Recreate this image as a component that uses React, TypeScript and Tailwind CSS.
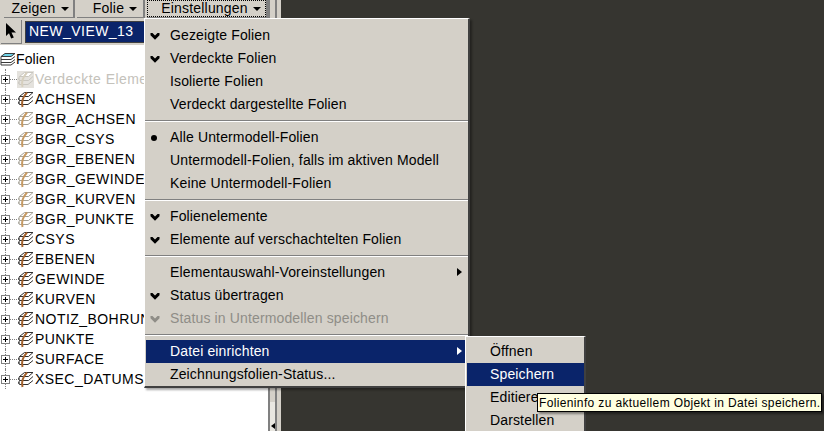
const font = 'font-["Liberation_Sans",Arial,sans-serif]';

const layers = [
  { name: 'Verdeckte Elemente', faded: true },
  { name: 'ACHSEN' },
  { name: 'BGR_ACHSEN', pale: true },
  { name: 'BGR_CSYS', pale: true },
  { name: 'BGR_EBENEN', pale: true },
  { name: 'BGR_GEWINDE', pale: true },
  { name: 'BGR_KURVEN', pale: true },
  { name: 'BGR_PUNKTE', pale: true },
  { name: 'CSYS' },
  { name: 'EBENEN' },
  { name: 'GEWINDE' },
  { name: 'KURVEN' },
  { name: 'NOTIZ_BOHRUNG' },
  { name: 'PUNKTE' },
  { name: 'SURFACE' },
  { name: 'XSEC_DATUMS' },
];

type MenuItem = {
  label?: string;
  mark?: 'check' | 'dot';
  disabled?: boolean;
  active?: boolean;
  arrow?: boolean;
  separator?: boolean;
};

const mainMenu: MenuItem[] = [
  { label: 'Gezeigte Folien', mark: 'check' },
  { label: 'Verdeckte Folien', mark: 'check' },
  { label: 'Isolierte Folien' },
  { label: 'Verdeckt dargestellte Folien' },
  { separator: true },
  { label: 'Alle Untermodell-Folien', mark: 'dot' },
  { label: 'Untermodell-Folien, falls im aktiven Modell' },
  { label: 'Keine Untermodell-Folien' },
  { separator: true },
  { label: 'Folienelemente', mark: 'check' },
  { label: 'Elemente auf verschachtelten Folien', mark: 'check' },
  { separator: true },
  { label: 'Elementauswahl-Voreinstellungen', arrow: true },
  { label: 'Status übertragen', mark: 'check' },
  { label: 'Status in Untermodellen speichern', mark: 'check', disabled: true },
  { separator: true },
  { label: 'Datei einrichten', active: true, arrow: true },
  { label: 'Zeichnungsfolien-Status...' },
];

const Check = ({ color }: { color: string }) => (
  <svg width="10" height="8" viewBox="0 0 10 8">
    <path d="M0.5 1 H2.5 L5 3.5 L7.5 1 H9.5 V3.2 L5 7.7 L0.5 3.2 Z" fill={color} />
  </svg>
);

const LayerIcon = ({ faded, pale }: { faded?: boolean; pale?: boolean }) => {
  const line = faded ? '#c9c7c0' : pale ? '#a3a095' : '#2f2f2f';
  const pole = faded ? '#d6cfbd' : pale ? '#c79a62' : '#a5622c';
  return (
    <svg width="17" height="17" viewBox="0 0 17 17" className={faded ? 'bg-[#e4e2dd]' : ''}>
      <path d="M2.5 5.5 L7.5 1.5 H16 L11.5 5.5 Z" fill="#ffffff" stroke={line} />
      <path d="M2.5 5.5 L1.5 8 L2.5 9.5 L1.5 12 L2.5 13.5 H11 L16 9.5 M2.5 9.5 H11.5 L16 5.5 M1.5 8 H3 M1.5 12 H3" fill="none" stroke={line} />
      <path d="M5.5 16 Q3.5 8.5 10 1.5" fill="none" stroke={pole} strokeWidth="2" />
    </svg>
  );
};

const Expander = () => (
  <div className="flex items-center w-[16px] h-full shrink-0 relative">
    <div className="absolute left-[4px] top-0 h-full border-l border-dotted border-[#808080]" />
    <div className="w-[9px] h-[9px] border border-[#808080] bg-white flex items-center justify-center relative shrink-0">
      <div className="w-[5px] h-px bg-black" />
      <div className="absolute w-px h-[5px] bg-black" />
    </div>
    <div className="w-[7px] border-t border-dotted border-[#808080]" />
  </div>
);

const ToolButton = ({ label, width, focused }: { label: string; width: string; focused?: boolean }) => (
  <div className={`${width} h-[18px] shrink-0 flex items-center bg-[#d4d0c8] border-r-2 border-b border-r-[#808080] border-b-[#808080] text-[14px] tracking-[0.2px] text-black`}>
    <div className={`flex items-center justify-center gap-[5px] w-full h-full ${focused ? 'border border-dotted border-black pl-[9px]' : ''}`}>
      <span>{label}</span>
      <span className="w-0 h-0 border-x-[4px] border-x-transparent border-t-[4px] border-t-black" />
    </div>
  </div>
);

const Row = ({ item }: { item: MenuItem }) => {
  if (item.separator) {
    return (
      <div className="h-[10px] flex flex-col justify-center -mx-px">
        <div className="h-px bg-[#808080]" />
        <div className="h-px bg-white" />
      </div>
    );
  }
  const text = item.active ? 'text-white bg-[#0a246a]' : item.disabled ? 'text-[#8f8d87]' : 'text-black';
  return (
    <div className={`h-[23px] flex items-center text-[14px] tracking-[0.14px] relative ${text}`}>
      <div className="w-[24px] shrink-0 flex pl-[4px]">
        {item.mark === 'check' && <Check color={item.disabled ? '#8f8d87' : '#000000'} />}
        {item.mark === 'dot' && <div className="ml-[1px] w-[6px] h-[6px] rounded-full bg-black" />}
      </div>
      <span className="whitespace-nowrap">{item.label}</span>
      {item.arrow && (
        <span className={`absolute right-[5px] top-[7px] w-0 h-0 border-y-[4.5px] border-y-transparent border-l-[5px] ${item.active ? 'border-l-white' : 'border-l-black'}`} />
      )}
    </div>
  );
};

export default function App() {
  return (
    <div className={`relative w-[824px] h-[431px] overflow-hidden flex bg-[#363530] ${font}`}>
      <div className="w-[268px] h-full bg-white flex flex-col shrink-0">
        <div className="flex gap-[2px] bg-[#d4d0c8] h-[18px]">
          <div className="w-[2px] shrink-0" />
          <ToolButton label="Zeigen" width="w-[71px] pl-[3px]" />
          <ToolButton label="Folie" width="w-[68px] pl-[10px]" />
          <ToolButton label="Einstellungen" width="w-[121px]" focused />
        </div>
        <div className="flex items-center gap-[3px] h-[27px] bg-[#d4d0c8] pl-[1px]">
          <div className="w-[21px] h-[24px] flex items-center justify-center border-r border-b border-[#808080]">
            <svg width="12" height="16" viewBox="0 0 12 16">
              <path d="M1 0 V13 L4 10.2 L6.2 15.5 L8.8 14.4 L6.5 9.5 H11 Z" fill="#000000" />
            </svg>
          </div>
          <div className="w-[125px] h-[22px] border border-[#404040] bg-[#0a246a] text-white text-[14px] tracking-[0.45px] flex items-center pl-[3px]">
            NEW_VIEW_13
          </div>
        </div>
        <div className="flex-1 pt-[4px] overflow-hidden">
          <div className="h-[20px] flex items-center text-[14px] tracking-[0.14px] text-black">
            <svg width="16" height="14" viewBox="0 0 16 14">
              <path d="M1 4.5 L5 1.5 H15 L11 4.5 Z" fill="#6fd3e8" stroke="#3a3a3a" />
              <path d="M1 7.5 H11 L15 4.5 M1 10.5 H11 L15 7.5 M1 13 H11 L15 10 M1 4.5 V13" fill="none" stroke="#3a3a3a" />
            </svg>
            <span>Folien</span>
          </div>
          {layers.map((layer) => (
            <div key={layer.name} className="h-[20px] flex items-center text-[14px] tracking-[0.45px] whitespace-nowrap pl-[1px]">
              <Expander />
              <LayerIcon faded={layer.faded} pale={layer.pale} />
              <span className={`ml-[1px] ${layer.faded ? 'text-[#c4c2bb]' : 'text-black'}`}>{layer.name}</span>
            </div>
          ))}
        </div>
      </div>

      <div className="w-[13px] shrink-0 h-full flex bg-[#d4d0c8] relative">
        <div className="w-[2px] bg-[#808080]" />
        <div className="w-[5px]" />
        <div className="w-[2px] bg-[#808080]" />
        <div className="w-[4px] bg-[#d4d0c8]" />
        <div className="absolute left-[2px] bottom-0 w-[5px] h-[29px] bg-[#e9e7e1] flex items-end justify-center pb-[2px]">
          <span className="w-0 h-0 border-y-[3.5px] border-y-transparent border-r-[4px] border-r-black" />
        </div>
      </div>

      <div className="absolute left-[144px] top-[18px] w-[326px] h-[370px] bg-[#d4d0c8] border-t border-l border-t-white border-l-white border-r-2 border-b-2 border-r-[#404040] border-b-[#404040] px-[1px] pt-[5px] shadow-[2px_2px_2px_rgba(0,0,0,0.35)]">
        {mainMenu.map((item, i) => (
          <Row key={i} item={item} />
        ))}
      </div>

      <div className="absolute left-[465px] top-[336px] w-[121px] h-[110px] bg-[#d4d0c8] border-t border-l border-t-white border-l-white border-r-2 border-r-[#404040] pl-[1px] pt-[3px] text-[14px] tracking-[0.14px] text-black">
        <div className="h-[23px] flex items-center pl-[23px]">Öffnen</div>
        <div className="h-[23px] flex items-center pl-[23px] bg-[#0a246a] text-white">Speichern</div>
        <div className="h-[23px] flex items-center pl-[23px]">Editieren</div>
        <div className="h-[23px] flex items-center pl-[23px]">Darstellen</div>
      </div>

      <div className="absolute left-[537px] top-[393px] h-[19px] w-[285px] bg-[#ffffe1] border border-black text-[12px] tracking-[0.36px] text-black flex items-center pl-px whitespace-nowrap shadow-[2px_2px_2px_rgba(0,0,0,0.4)]">
        Folieninfo zu aktuellem Objekt in Datei speichern.
      </div>
    </div>
  );
}
